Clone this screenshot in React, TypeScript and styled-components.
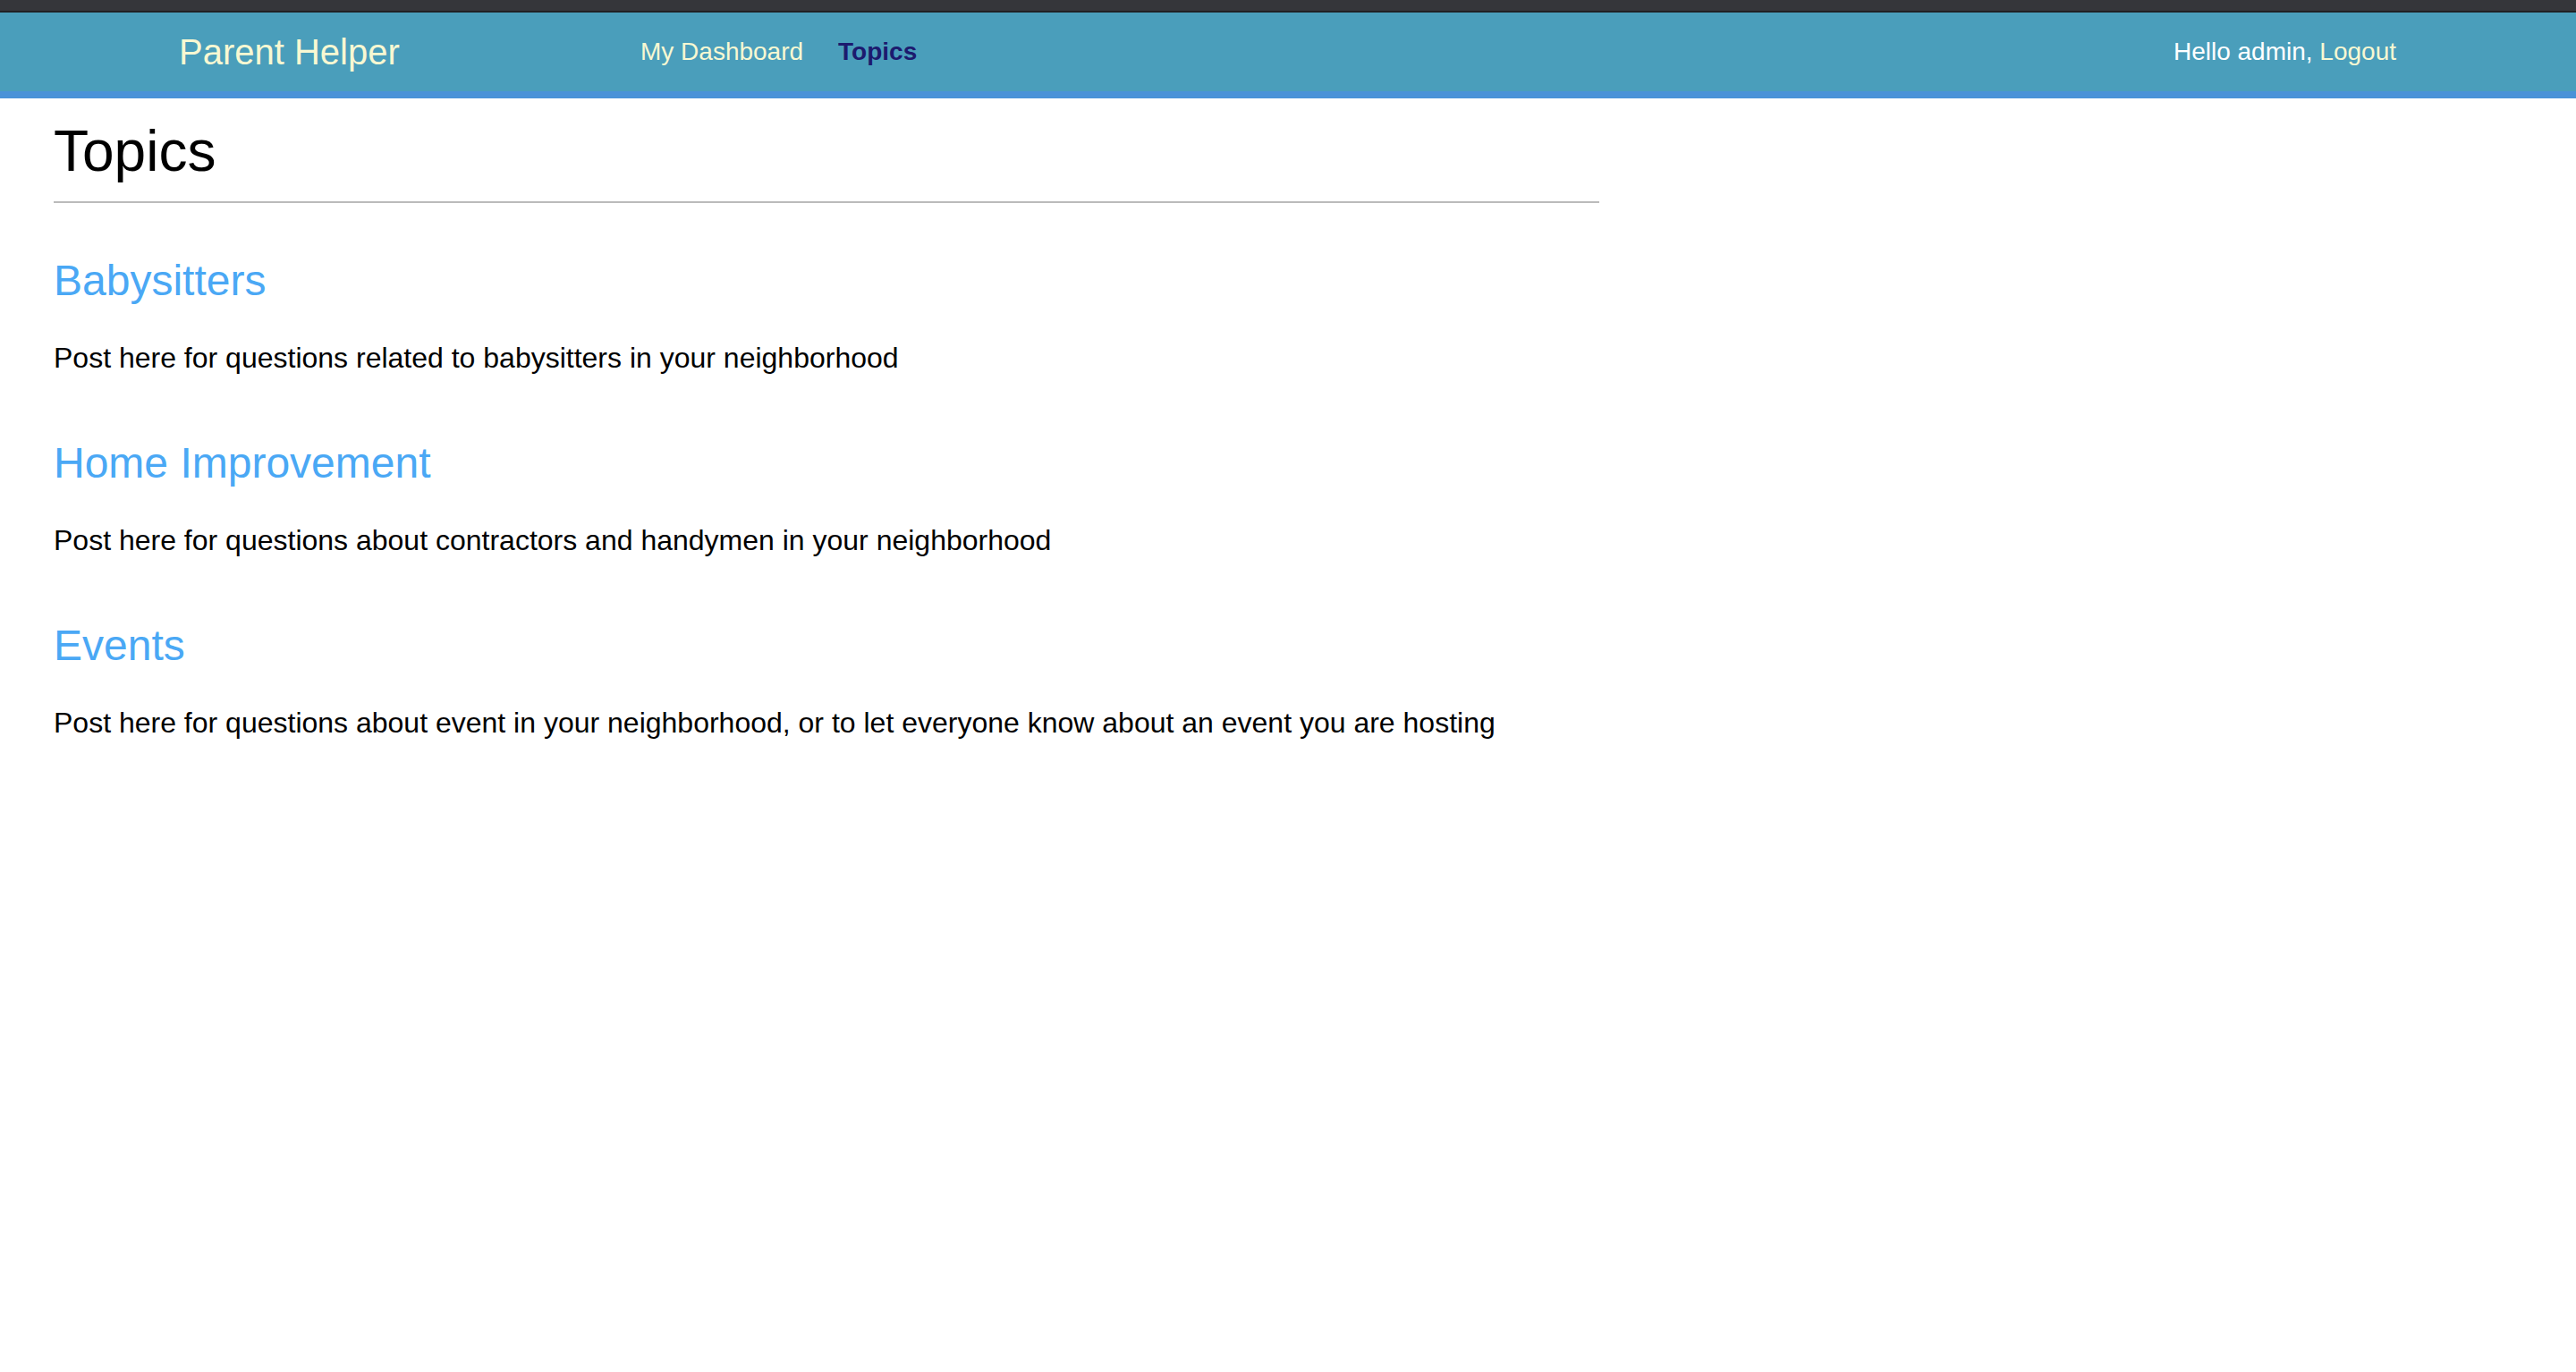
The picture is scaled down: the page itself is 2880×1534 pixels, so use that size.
import React from 'react';
import styled, { createGlobalStyle } from 'styled-components';

// Page-wide defaults
const GlobalStyle = createGlobalStyle`
  html, body {
    margin: 0;
    padding: 0;
    background: #ffffff;
    font-family: "Liberation Sans", Arial, Helvetica, sans-serif;
  }
`;

const TopStrip = styled.div`
  height: 12px;
  background-color: #35363a;
  border-bottom: 2px solid #202124;
`;

const Header = styled.header`
  display: flex;
  align-items: center;
  height: 88px;
  padding: 0 201px 0 200px;
  background-color: #4a9ebb;
  border-bottom: 8px solid #4a92d8;
`;

const Brand = styled.a`
  width: 516px;
  flex-shrink: 0;
  font-size: 40px;
  color: #f8f8d2;
  text-decoration: none;
`;

const Nav = styled.nav`
  display: flex;
  align-items: center;
  gap: 39px;
  flex: 1;
`;

const NavLink = styled.a<{ $active?: boolean }>`
  font-size: 28px;
  color: ${(p) => (p.$active ? '#1c1a6e' : '#f8f8d2')};
  font-weight: ${(p) => (p.$active ? 700 : 400)};
  text-decoration: none;
`;

const UserInfo = styled.div`
  font-size: 28px;
  color: #ffffff;
`;

const LogoutLink = styled.a`
  color: #f8f8d2;
  text-decoration: none;
`;

const Main = styled.main`
  width: 60%;
  padding-left: 60px;
`;

const PageTitle = styled.h1`
  margin: 22px 0 0;
  padding-bottom: 19px;
  font-size: 64px;
  font-weight: 400;
  color: #000;
  border-bottom: 2px solid #bbbbbb;
`;

const TopicList = styled.div`
  display: flex;
  flex-direction: column;
  gap: 71px;
  padding-top: 59px;
`;

const Topic = styled.section`
  display: flex;
  flex-direction: column;
  gap: 41px;
`;

const TopicTitle = styled.a`
  font-size: 48px;
  color: #4aa8f5;
  text-decoration: none;
`;

const TopicDescription = styled.p`
  margin: 0;
  font-size: 32px;
  color: #000;
`;

const topics = [
  {
    name: 'Babysitters',
    description: 'Post here for questions related to babysitters in your neighborhood',
  },
  {
    name: 'Home Improvement',
    description: 'Post here for questions about contractors and handymen in your neighborhood',
  },
  {
    name: 'Events',
    description:
      'Post here for questions about event in your neighborhood, or to let everyone know about an event you are hosting',
  },
];

const App: React.FC = () => {
  return (
    <>
      <GlobalStyle />
      <TopStrip />
      <Header>
        <Brand href="#">Parent Helper</Brand>
        <Nav>
          <NavLink href="#">My Dashboard</NavLink>
          <NavLink href="#" $active>
            Topics
          </NavLink>
        </Nav>
        <UserInfo>
          Hello admin, <LogoutLink href="#">Logout</LogoutLink>
        </UserInfo>
      </Header>
      <Main>
        <PageTitle>Topics</PageTitle>
        <TopicList>
          {topics.map((t) => (
            <Topic key={t.name}>
              <TopicTitle href="#">{t.name}</TopicTitle>
              <TopicDescription>{t.description}</TopicDescription>
            </Topic>
          ))}
        </TopicList>
      </Main>
    </>
  );
};

export default App;
